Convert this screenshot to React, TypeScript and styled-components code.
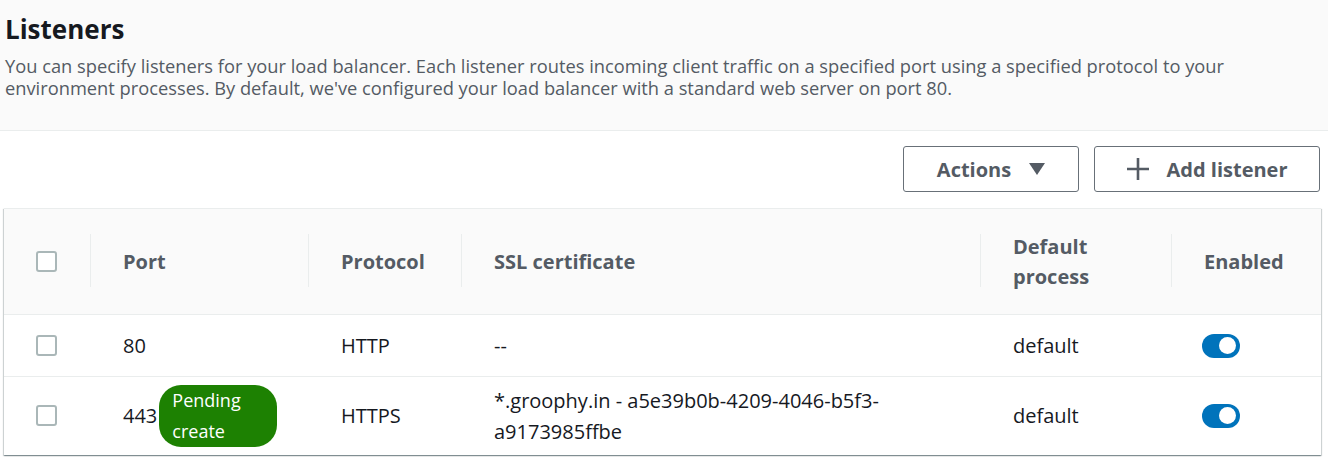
import React from "react";
import styled, { createGlobalStyle } from "styled-components";

const Global = createGlobalStyle`
  html, body { margin: 0; padding: 0; background: #ffffff; }
  body { font-family: "Open Sans", "Noto Sans", Arial, sans-serif; color: #16191f; }
`;

const Page = styled.div`
  width: 1328px;
  height: 462px;
  overflow: hidden;
  background: #ffffff;
`;

const Header = styled.header`
  background: #fafafa;
  border-bottom: 1px solid #eaeded;
  padding: 11px 0 0 5px;
  height: 119px;
  box-sizing: content-box;
`;

const Title = styled.h2`
  margin: 0;
  font-size: 26px;
  line-height: 36px;
  font-weight: 700;
  color: #16191f;
`;

const Description = styled.p`
  margin: 8px 0 0;
  font-size: 18.3px;
  line-height: 22px;
  color: #545b64;
  max-width: 1240px;
`;

const Toolbar = styled.div`
  display: flex;
  justify-content: flex-end;
  gap: 15px;
  padding: 15px 8px 0 0;
`;

const Button = styled.button<{ $w: number }>`
  display: flex;
  align-items: center;
  justify-content: center;
  gap: 18px;
  height: 46px;
  width: ${(p) => p.$w}px;
  background: #ffffff;
  border: 1px solid #687078;
  border-radius: 3px;
  font-family: inherit;
  font-size: 20px;
  font-weight: 700;
  color: #545b64;
  cursor: pointer;
  padding: 0;
`;

const TableWrap = styled.div`
  margin: 16px 7px 0 4px;
  border-top: 1px solid #eaeded;
  box-shadow: 0 1px 1px 0 rgba(0, 28, 36, 0.3), 1px 1px 1px 0 rgba(0, 28, 36, 0.15),
    -1px 1px 1px 0 rgba(0, 28, 36, 0.15);
  background: #ffffff;
`;

const Table = styled.table`
  width: 100%;
  border-collapse: collapse;
  table-layout: fixed;
`;

const Th = styled.th<{ $divider?: boolean }>`
  position: relative;
  background: #fafafa;
  height: 105px;
  padding: 0 20px 0 33px;
  text-align: left;
  vertical-align: middle;
  font-size: 20px;
  line-height: 30px;
  font-weight: 700;
  color: #545b64;
  border-bottom: 1px solid #eaeded;
  &::before {
    content: "";
    display: ${(p) => (p.$divider ? "block" : "none")};
    position: absolute;
    left: 0;
    top: 25px;
    bottom: 27px;
    width: 1px;
    background: #eaeded;
  }
`;

const CheckTh = styled(Th)`
  padding: 0 0 0 32px;
`;

const Tr = styled.tr<{ $h: number }>`
  height: ${(p) => p.$h}px;
`;

const Td = styled.td<{ $sep?: boolean }>`
  padding: 0 20px 0 33px;
  vertical-align: middle;
  font-size: 20px;
  line-height: 31px;
  color: #16191f;
  border-top: ${(p) => (p.$sep ? "1px solid #eaeded" : "none")};
`;

const CheckTd = styled(Td)`
  padding: 0 0 0 32px;
`;

const Checkbox = styled.span`
  display: block;
  width: 17px;
  height: 17px;
  border: 2px solid #aab7b8;
  border-radius: 3px;
  background: #ffffff;
`;

const PortCell = styled.div`
  display: flex;
  align-items: center;
`;

const Badge = styled.span`
  display: inline-block;
  margin-left: 2px;
  background: #1d8102;
  color: #ffffff;
  border-radius: 22px;
  padding: 0 36px 0 13px;
  font-size: 18px;
  line-height: 31px;
  width: 69px;
`;

const Toggle = styled.span`
  display: flex;
  align-items: center;
  justify-content: flex-end;
  width: 38px;
  height: 24px;
  border-radius: 12px;
  background: #0073bb;
  padding: 0 4px 0 0;
  box-sizing: border-box;
  margin-left: -2px;
  &::after {
    content: "";
    width: 17px;
    height: 17px;
    border-radius: 50%;
    background: #ffffff;
  }
`;

const CaretIcon = () => (
  <svg width="16" height="12" viewBox="0 0 16 12" aria-hidden>
    <path d="M0 0 H16 L8 12 Z" fill="#545b64" />
  </svg>
);

const PlusIcon = () => (
  <svg width="22" height="22" viewBox="0 0 22 22" aria-hidden>
    <path d="M11 0 V22 M0 11 H22" stroke="#545b64" strokeWidth="2.6" fill="none" />
  </svg>
);

const widths = [86, 218, 153, 519, 191];

export default function App() {
  return (
    <Page>
      <Global />
      <Header>
        <Title>Listeners</Title>
        <Description>
          You can specify listeners for your load balancer. Each listener routes incoming client
          traffic on a specified port using a specified protocol to your environment processes. By
          default, we've configured your load balancer with a standard web server on port 80.
        </Description>
      </Header>
      <Toolbar>
        <Button $w={176}>
          Actions
          <CaretIcon />
        </Button>
        <Button $w={226}>
          <PlusIcon />
          Add listener
        </Button>
      </Toolbar>
      <TableWrap>
        <Table>
          <colgroup>
            {widths.map((w, i) => (
              <col key={i} style={{ width: w }} />
            ))}
            <col />
          </colgroup>
          <thead>
            <tr>
              <CheckTh>
                <Checkbox />
              </CheckTh>
              <Th $divider>Port</Th>
              <Th $divider>Protocol</Th>
              <Th $divider>SSL certificate</Th>
              <Th $divider>
                Default
                <br />
                process
              </Th>
              <Th $divider>Enabled</Th>
            </tr>
          </thead>
          <tbody>
            <Tr $h={62}>
              <CheckTd>
                <Checkbox />
              </CheckTd>
              <Td>80</Td>
              <Td>HTTP</Td>
              <Td>--</Td>
              <Td>default</Td>
              <Td>
                <Toggle />
              </Td>
            </Tr>
            <Tr $h={78}>
              <CheckTd $sep>
                <Checkbox />
              </CheckTd>
              <Td $sep>
                <PortCell>
                  443
                  <Badge>Pending create</Badge>
                </PortCell>
              </Td>
              <Td $sep>HTTPS</Td>
              <Td $sep>*.groophy.in - a5e39b0b-4209-4046-b5f3-a9173985ffbe</Td>
              <Td $sep>default</Td>
              <Td $sep>
                <Toggle />
              </Td>
            </Tr>
          </tbody>
        </Table>
      </TableWrap>
    </Page>
  );
}
